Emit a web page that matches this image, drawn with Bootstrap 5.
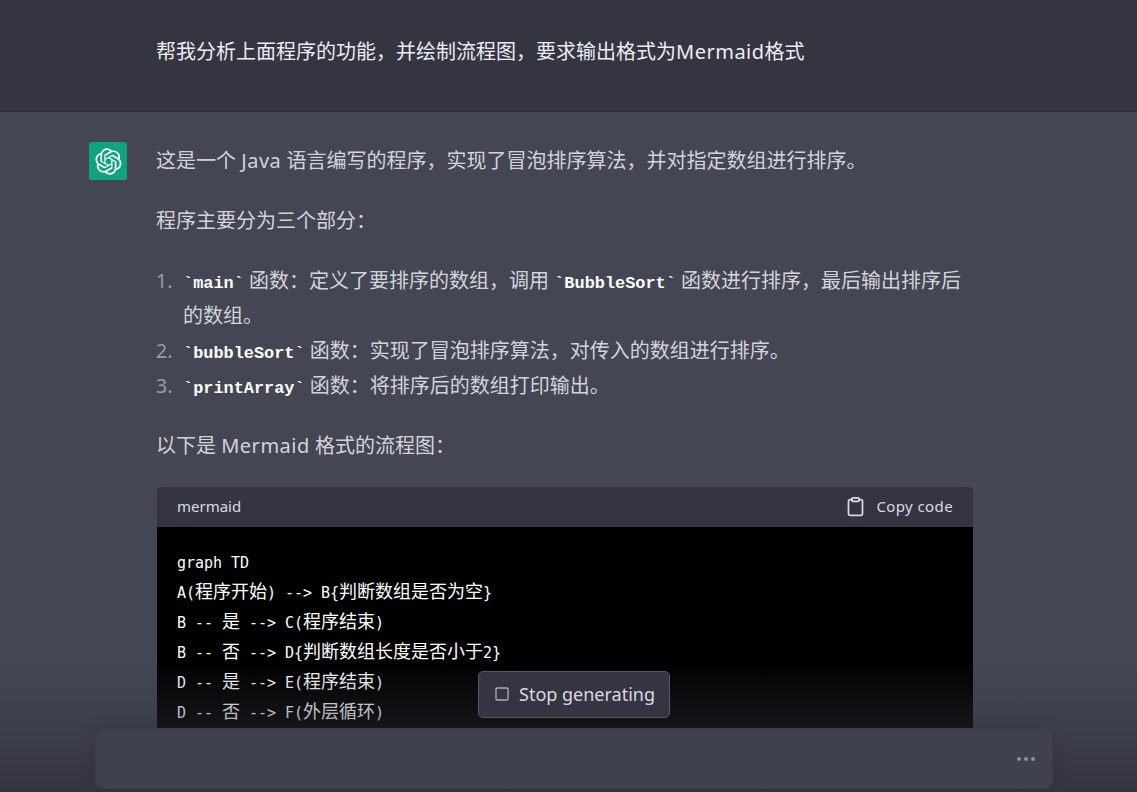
<!DOCTYPE html>
<html lang="zh">
<head>
<meta charset="utf-8">
<title>Chat</title>
<link href="https://cdn.jsdelivr.net/npm/bootstrap@5.3.0/dist/css/bootstrap.min.css" rel="stylesheet">
<style>
html,body{height:100%;overflow:hidden;background:#444654}
body{font-family:"Noto Sans","Noto Sans CJK SC",sans-serif;font-size:20px;line-height:35px;color:#d1d5db}
.chat-page{height:792px}
.lat{letter-spacing:.5px}
.user-row{background:#343541;border-bottom:1px solid #2b2c33;height:112px;padding:34px 0 0 156px;color:#ececf1}
.bot-row{background:#444654;padding:30px 0 0 89px;gap:29px}
.bot-logo{width:38px;height:38px;background:#10a37f;border-radius:3px;color:#fff;flex:none}
.bot-body{width:817px;flex:none;padding-top:1px}
.bot-body p{margin:0 0 25px}
.step-list{margin:0 0 25px;padding-left:27px}
.step-list li::marker{color:#9a9ba8;content:counter(list-item) ".  "}
.tick{font-family:"Liberation Mono",monospace;font-weight:700;font-size:16.9px;line-height:1;color:#fff}
.code-box{background:#000;border-radius:6px 6px 0 0;margin:-1px 0 0 1px}
.code-head{height:40px;background:#343541;border-radius:6px 6px 0 0;padding:0 20px 2px;font-size:15px;line-height:38px;color:#d9d9e3}
.copy-label{letter-spacing:.4px}
.copy-btn{gap:10px}
.code-body{margin:0;padding:21px 20px 0;font-family:"DejaVu Sans Mono",monospace;font-size:15px;letter-spacing:-.03px;line-height:30px;color:#fff;white-space:pre;overflow:hidden}
.code-body span{font-family:"Noto Sans CJK SC",sans-serif;font-size:18px;letter-spacing:0;line-height:1}
.fade-zone{height:132px;padding:11px 84px 3px 95px;background:linear-gradient(180deg,rgba(52,53,65,0) 0%,rgba(52,53,65,.42) 50%,#343541 100%)}
.stop-btn{height:47px;width:192px;background:#343541;border:1px solid #565869;border-radius:5px;color:#d9d9e3;font-size:18px;line-height:1;padding:0 0 2px 15px;gap:9px}
.input-box{height:61px;width:958px;background:#40414f;border-radius:8px;box-shadow:0 0 15px rgba(0,0,0,.12);border:1px solid #3c3d49;padding:1px 17px 0 0;gap:3px}
.wait-dot{width:4px;height:4px;border-radius:50%;background:#8e8ea0}
</style>
</head>
<body>
<div class="chat-page position-relative overflow-hidden">
  <div class="user-row">帮我分析上面程序的功能，并绘制流程图，要求输出格式为<span class="lat">Mermaid</span>格式</div>
  <div class="bot-row d-flex align-items-start">
    <div class="bot-logo d-flex align-items-center justify-content-center">
      <svg width="27" height="27" viewBox="0 0 41 41" fill="none"><path d="M37.5324 16.8707C37.9808 15.5241 38.1363 14.0974 37.9886 12.6859C37.8409 11.2744 37.3934 9.91076 36.676 8.68622C35.6126 6.83404 33.9882 5.3676 32.0373 4.4985C30.0864 3.62941 27.9098 3.40259 25.8215 3.85078C24.8796 2.7893 23.7219 1.94125 22.4257 1.36341C21.1295 0.785575 19.7249 0.491269 18.3058 0.500197C16.1708 0.495044 14.0893 1.16803 12.3614 2.42214C10.6335 3.67624 9.34853 5.44666 8.6917 7.47815C7.30085 7.76286 5.98686 8.3414 4.8377 9.17505C3.68854 10.0087 2.73073 11.0782 2.02839 12.312C0.956464 14.1591 0.498905 16.2988 0.721698 18.4228C0.944492 20.5467 1.83612 22.5449 3.268 24.1293C2.81966 25.4759 2.66413 26.9026 2.81182 28.3141C2.95951 29.7256 3.40701 31.0892 4.12437 32.3138C5.18791 34.1659 6.8123 35.6322 8.76321 36.5013C10.7141 37.3704 12.8907 37.5973 14.9789 37.1492C15.9208 38.2107 17.0786 39.0587 18.3747 39.6366C19.6709 40.2144 21.0755 40.5087 22.4946 40.4998C24.6307 40.5054 26.7133 39.8321 28.4418 38.5772C30.1704 37.3223 31.4556 35.5506 32.1119 33.5179C33.5027 33.2332 34.8167 32.6547 35.9659 31.821C37.115 30.9874 38.0728 29.9178 38.7752 28.684C39.8458 26.8371 40.3023 24.6979 40.0789 22.5748C39.8556 20.4517 38.9639 18.4544 37.5324 16.8707ZM22.4978 37.8849C20.7443 37.8874 19.0459 37.2733 17.6994 36.1501C17.7601 36.117 17.8666 36.0586 17.936 36.0161L25.9004 31.4156C26.1003 31.3019 26.2663 31.137 26.3813 30.9378C26.4964 30.7386 26.5563 30.5124 26.5549 30.2825V19.0542L29.9213 20.998C29.9389 21.0068 29.9541 21.0198 29.9656 21.0359C29.977 21.052 29.9842 21.0707 29.9867 21.0902V30.3889C29.9842 32.375 29.1946 34.2791 27.7909 35.6841C26.3872 37.0892 24.4838 37.8806 22.4978 37.8849ZM6.39227 31.0064C5.51397 29.4888 5.19742 27.7107 5.49804 25.9832C5.55718 26.0187 5.66048 26.0818 5.73461 26.1244L13.699 30.7248C13.8975 30.8408 14.1233 30.902 14.3532 30.902C14.583 30.902 14.8088 30.8408 15.0073 30.7248L24.731 25.1103V28.9979C24.7321 29.0177 24.7283 29.0376 24.7199 29.0556C24.7115 29.0736 24.6988 29.0893 24.6829 29.1012L16.6317 33.7497C14.9096 34.7416 12.8643 35.0097 10.9447 34.4954C9.02506 33.9811 7.38785 32.7263 6.39227 31.0064ZM4.29707 13.6194C5.17156 12.0998 6.55279 10.9364 8.19885 10.3327C8.19885 10.4013 8.19491 10.5228 8.19491 10.6071V19.808C8.19351 20.0378 8.25334 20.2638 8.36823 20.4629C8.48312 20.6619 8.64893 20.8267 8.84863 20.9404L18.5723 26.5542L15.206 28.4979C15.1894 28.5089 15.1703 28.5155 15.1505 28.5173C15.1307 28.5191 15.1107 28.516 15.0924 28.5082L7.04046 23.8557C5.32135 22.8601 4.06716 21.2235 3.55289 19.3046C3.03862 17.3858 3.30624 15.3413 4.29707 13.6194ZM31.955 20.0556L22.2312 14.4411L25.5976 12.4981C25.6142 12.4872 25.6333 12.4805 25.6531 12.4787C25.6729 12.4769 25.6928 12.4801 25.7111 12.4879L33.7631 17.1364C34.9967 17.849 36.0017 18.8982 36.6606 20.1613C37.3194 21.4244 37.6047 22.849 37.4832 24.2684C37.3617 25.6878 36.8382 27.0432 35.9743 28.1759C35.1103 29.3086 33.9415 30.1717 32.6047 30.6641C32.6047 30.5947 32.6047 30.4733 32.6047 30.3889V21.188C32.6066 20.9586 32.5474 20.7328 32.4332 20.5338C32.319 20.3348 32.154 20.1698 31.955 20.0556ZM35.3055 15.0128C35.2464 14.9765 35.1431 14.9142 35.069 14.8717L27.1045 10.2712C26.906 10.1554 26.6803 10.0943 26.4504 10.0943C26.2206 10.0943 25.9948 10.1554 25.7963 10.2712L16.0726 15.8858V11.9982C16.0715 11.9783 16.0753 11.9585 16.0837 11.9405C16.0921 11.9225 16.1048 11.9068 16.1207 11.8949L24.1719 7.25025C25.4053 6.53903 26.8158 6.19376 28.2383 6.25482C29.6608 6.31589 31.0364 6.78077 32.2044 7.59508C33.3723 8.40939 34.2842 9.53945 34.8334 10.8531C35.3826 12.1667 35.5464 13.6095 35.3055 15.0128ZM14.2424 21.9419L10.8752 19.9981C10.8576 19.9893 10.8423 19.9763 10.8309 19.9602C10.8195 19.9441 10.8122 19.9254 10.8098 19.9058V10.6071C10.8107 9.18295 11.2173 7.78848 11.9819 6.58696C12.7466 5.38544 13.8377 4.42659 15.1275 3.82264C16.4173 3.21869 17.8524 2.99464 19.2649 3.1767C20.6775 3.35876 22.0089 3.93941 23.1034 4.85067C23.0427 4.88379 22.937 4.94215 22.8668 4.98473L14.9024 9.58517C14.7025 9.69878 14.5366 9.86356 14.4215 10.0626C14.3065 10.2616 14.2466 10.4877 14.2479 10.7175L14.2424 21.9419ZM16.071 17.9991L20.4018 15.4978L24.7325 17.9975V22.9985L20.4018 25.4983L16.071 22.9985V17.9991Z" fill="currentColor"/></svg>
    </div>
    <div class="bot-body">
      <p>这是一个 <span class="lat">Java</span> 语言编写的程序，实现了冒泡排序算法，并对指定数组进行排序。</p>
      <p>程序主要分为三个部分：</p>
      <ol class="step-list">
        <li><span class="tick">`main`</span> 函数：定义了要排序的数组，调用 <span class="tick">`BubbleSort`</span> 函数进行排序，最后输出排序后的数组。</li>
        <li><span class="tick">`bubbleSort`</span> 函数：实现了冒泡排序算法，对传入的数组进行排序。</li>
        <li><span class="tick">`printArray`</span> 函数：将排序后的数组打印输出。</li>
      </ol>
      <p>以下是 <span class="lat">Mermaid</span> 格式的流程图：</p>
      <div class="code-box">
        <div class="code-head d-flex justify-content-between align-items-center">
          <div>mermaid</div>
          <div class="copy-btn d-flex align-items-center">
            <svg width="21" height="21" viewBox="0 0 24 24" fill="none" stroke="currentColor" stroke-width="2" stroke-linecap="round" stroke-linejoin="round"><path d="M16 4h2a2 2 0 0 1 2 2v14a2 2 0 0 1-2 2H6a2 2 0 0 1-2-2V6a2 2 0 0 1 2-2h2"/><rect x="8" y="2" width="8" height="4" rx="1" ry="1"/></svg>
            <div class="copy-label">Copy code</div>
          </div>
        </div>
<pre class="code-body">graph TD
A(<span>程序开始</span>) --&gt; B{<span>判断数组是否为空</span>}
B -- <span>是</span> --&gt; C(<span>程序结束</span>)
B -- <span>否</span> --&gt; D{<span>判断数组长度是否小于</span>2}
D -- <span>是</span> --&gt; E(<span>程序结束</span>)
D -- <span>否</span> --&gt; F(<span>外层循环</span>)</pre>
      </div>
    </div>
  </div>
  <div class="fade-zone position-absolute bottom-0 start-0 end-0 d-flex flex-column align-items-center justify-content-between">
    <div class="stop-btn d-flex align-items-center">
      <svg width="16" height="16" viewBox="0 0 24 24" fill="none" stroke="#acacbe" stroke-width="2"><rect x="3" y="3" width="18" height="18" rx="2"/></svg>
      <span>Stop generating</span>
    </div>
    <div class="input-box d-flex align-items-center justify-content-end">
      <span class="wait-dot"></span><span class="wait-dot"></span><span class="wait-dot"></span>
    </div>
  </div>
</div>
<script src="https://cdn.jsdelivr.net/npm/bootstrap@5.3.0/dist/js/bootstrap.bundle.min.js"></script>
</body>
</html>
